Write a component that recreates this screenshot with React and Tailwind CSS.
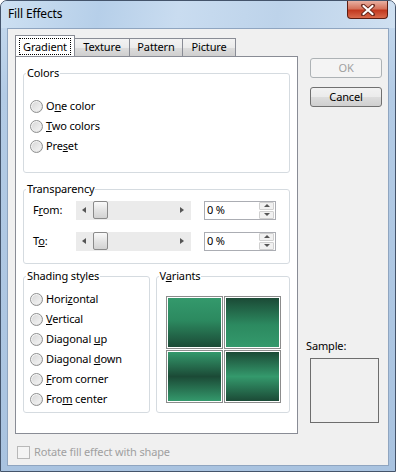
import React from "react";

const tileGradients = [
  "bg-[linear-gradient(to_bottom,#34996c_0%,#2c8a60_45%,#1b4a36_100%)]",
  "bg-[linear-gradient(to_bottom,#1b4a36_0%,#2c8a60_55%,#34996c_100%)]",
  "bg-[linear-gradient(to_bottom,#34996c_0%,#1b4a36_50%,#34996c_100%)]",
  "bg-[linear-gradient(to_bottom,#1b4a36_0%,#34996c_50%,#1b4a36_100%)]",
];

function Radio({ children }) {
  return (
    <div className="flex h-[20px] items-center gap-[3px] pl-[6px]">
      <span className="flex h-[13px] w-[13px] items-center justify-center rounded-full border border-[#8e8f8f] bg-[linear-gradient(135deg,#ffffff,#dcdcdc)]">
        <span className="h-[9px] w-[9px] rounded-full bg-[linear-gradient(135deg,#d8d8d8,#f4f4f4)]" />
      </span>
      <span>{children}</span>
    </div>
  );
}

function Group({ legend, className, children }) {
  return (
    <fieldset className={`rounded-[3px] border border-[#d5dbe0] ${className}`}>
      <legend className="ml-[2px] px-[1px] leading-[16px]">{legend}</legend>
      {children}
    </fieldset>
  );
}

function Slider() {
  return (
    <div className="flex h-[19px] w-[115px] items-center bg-[#ebebeb]">
      <span className="ml-[6px] h-0 w-0 border-y-[3px] border-r-[4px] border-y-transparent border-r-[#555]" />
      <span className="ml-[7px] h-[18px] w-[15px] rounded-[2px] border border-[#8a8a8a] bg-[linear-gradient(to_bottom,#fafafa,#e4e4e4_50%,#d2d2d2)]" />
      <span className="ml-auto mr-[7px] h-0 w-0 border-y-[3px] border-l-[4px] border-y-transparent border-l-[#555]" />
    </div>
  );
}

function Spin() {
  return (
    <div className="flex h-[19px] w-[72px] items-center border border-[#abadb3] bg-white">
      <span className="pl-[2px]">0 %</span>
      <div className="ml-auto mr-[1px] flex h-[17px] w-[15px] flex-col gap-px">
        <span className="flex h-[8px] items-center justify-center rounded-[1px] border border-[#d0d0d0] bg-[#f1f1f1]">
          <span className="h-0 w-0 border-x-[3px] border-b-[3px] border-x-transparent border-b-[#555]" />
        </span>
        <span className="flex h-[8px] items-center justify-center rounded-[1px] border border-[#d0d0d0] bg-[#f1f1f1]">
          <span className="h-0 w-0 border-x-[3px] border-t-[3px] border-x-transparent border-t-[#555]" />
        </span>
      </div>
    </div>
  );
}

function Tab({ label, width }) {
  return (
    <div className={`-ml-px flex h-[18px] items-center justify-center border border-b-0 border-[#898c95] bg-[linear-gradient(to_bottom,#f3f3f3,#ebebeb_50%,#dddddd_51%,#cfcfcf)] ${width}`}>
      {label}
    </div>
  );
}

export default function App() {
  return (
    <div className="flex h-[472px] w-[396px] flex-col overflow-hidden rounded-t-[7px] border border-[#44546b] bg-[linear-gradient(to_bottom,#c7dbef,#b3cbe5_20%,#a9c3e0)] font-['Noto_Sans',sans-serif] text-[11px] tracking-[-0.15px] text-black">
      {/* Title bar */}
      <div className="flex h-[27px] shrink-0 bg-[linear-gradient(100deg,#cde0f2_0%,#b6cfe9_25%,#c9dcf0_45%,#bdd3ea_70%,#cfe0f1_100%)]">
        <span className="pl-[7px] pt-[6px] text-[12px] leading-[14px]">Fill Effects</span>
        <div className="ml-auto mr-[7px] flex h-[18px] w-[41px] items-center justify-center rounded-b-[4px] border border-t-0 border-[#5c1d12] bg-[linear-gradient(to_bottom,#e8b0a2,#d5735c_45%,#c2391f_55%,#d96a4c)]">
          <svg width="16" height="12" viewBox="0 0 16 12">
            <path d="M3 1.5 L13 10.5 M13 1.5 L3 10.5" stroke="#6b2a1e" strokeWidth="4" strokeLinecap="round" />
            <path d="M3.5 2 L12.5 10 M12.5 2 L3.5 10" stroke="#ffffff" strokeWidth="2.2" strokeLinecap="round" />
          </svg>
        </div>
      </div>

      {/* Client area */}
      <div className="mx-[6px] flex h-[438px] flex-col border border-[#8fa5c0] bg-[#f0f0f0] pl-[7px] pt-[7px]">
        <div className="flex">
          {/* Tabs and panel */}
          <div className="flex w-[283px] flex-col">
            <div className="relative z-10 flex h-[20px] items-end">
              <div className="flex h-[21px] w-[60px] items-start justify-center border border-b-0 border-[#898c95] bg-white pt-[2px]">
                <span className="border border-dotted border-black px-[3px] leading-[15px]">Gradient</span>
              </div>
              <Tab label="Texture" width="w-[56px]" />
              <Tab label="Pattern" width="w-[54px]" />
              <Tab label="Picture" width="w-[54px]" />
            </div>
            <div className="flex h-[378px] flex-col border border-[#898c95] bg-white px-[7px] pt-[8px]">
              <Group legend="Colors" className="h-[108px]">
                <div className="pt-[15px]">
                  <Radio>O<u>n</u>e color</Radio>
                  <Radio><u>T</u>wo colors</Radio>
                  <Radio>Pre<u>s</u>et</Radio>
                </div>
              </Group>

              <Group legend="Transparency" className="mt-[8px] h-[83px]">
                <div className="flex flex-col gap-[11px] pl-[9px] pt-[3px]">
                  <div className="flex h-[20px] items-center">
                    <span className="w-[43px]">F<u>r</u>om:</span>
                    <Slider />
                    <span className="ml-[13px]"><Spin /></span>
                  </div>
                  <div className="flex h-[20px] items-center">
                    <span className="w-[43px]">T<u>o</u>:</span>
                    <Slider />
                    <span className="ml-[13px]"><Spin /></span>
                  </div>
                </div>
              </Group>

              <div className="mt-[4px] flex gap-[6px]">
                <Group legend="Shading styles" className="h-[145px] w-[127px]">
                  <div className="pt-[5px]">
                    <Radio>Hori<u>z</u>ontal</Radio>
                    <Radio><u>V</u>ertical</Radio>
                    <Radio>Diagonal <u>u</u>p</Radio>
                    <Radio>Diagonal <u>d</u>own</Radio>
                    <Radio><u>F</u>rom corner</Radio>
                    <Radio>Fro<u>m</u> center</Radio>
                  </div>
                </Group>
                <Group legend={<>V<u>a</u>riants</>} className="h-[145px] w-[135px]">
                  <div className="grid w-[124px] grid-cols-2 gap-x-[1px] gap-y-[1px] pl-[9px] pt-[12px]">
                    {tileGradients.map((g) => (
                      <div key={g} className="h-[53px] w-[57px] border border-[#8c8c8c] bg-white p-[1px]">
                        <div className={`h-full w-full ${g}`} />
                      </div>
                    ))}
                  </div>
                </Group>
              </div>
            </div>
          </div>

          {/* Buttons and sample */}
          <div className="ml-[12px] flex w-[72px] flex-col pt-[22px]">
            <div className="flex h-[20px] items-center justify-center rounded-[3px] border border-[#adb2b5] bg-[#f4f4f4] text-[#a0a0a0]">
              OK
            </div>
            <div className="mt-[9px] flex h-[20px] items-center justify-center rounded-[3px] border border-[#707070] bg-[linear-gradient(to_bottom,#f2f2f2,#ebebeb_50%,#dddddd_51%,#cfcfcf)]">
              Cancel
            </div>
            <span className="ml-[-4px] mt-[231px] leading-[16px]">Sample:</span>
            <div className="mt-[4px] h-[65px] w-[69px] border border-[#6d6d6d]" />
          </div>
        </div>

        {/* Footer checkbox */}
        <div className="mt-[10px] flex items-center gap-[4px] pl-[2px] text-[#a0a0a0]">
          <span className="h-[13px] w-[13px] border border-[#b8b8b8] bg-[#f4f4f4]" />
          <span>Rotate fill effect with shape</span>
        </div>
      </div>
    </div>
  );
}
